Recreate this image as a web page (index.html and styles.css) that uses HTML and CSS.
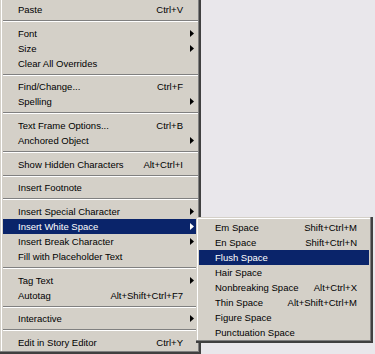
FILE: index.html
```html
<!DOCTYPE html>
<html>
<head>
<meta charset="utf-8">
<link rel="stylesheet" href="styles.css">
</head>
<body>
<div class="stage">
  <div class="menu main">
    <div class="item"><span class="label">Paste</span><span class="key">Ctrl+V</span><span class="arr"></span></div>
    <div class="sep s9"></div>
    <div class="item"><span class="label">Font</span><span class="arr"><svg width="4" height="7" viewBox="0 0 4 7"><polygon points="0,0 4,3.5 0,7"/></svg></span></div>
    <div class="item"><span class="label">Size</span><span class="arr"><svg width="4" height="7" viewBox="0 0 4 7"><polygon points="0,0 4,3.5 0,7"/></svg></span></div>
    <div class="item"><span class="label">Clear All Overrides</span><span class="arr"></span></div>
    <div class="sep s8"></div>
    <div class="item"><span class="label">Find/Change...</span><span class="key">Ctrl+F</span><span class="arr"></span></div>
    <div class="item"><span class="label">Spelling</span><span class="arr"><svg width="4" height="7" viewBox="0 0 4 7"><polygon points="0,0 4,3.5 0,7"/></svg></span></div>
    <div class="sep s9"></div>
    <div class="item"><span class="label">Text Frame Options...</span><span class="key">Ctrl+B</span><span class="arr"></span></div>
    <div class="item"><span class="label">Anchored Object</span><span class="arr"><svg width="4" height="7" viewBox="0 0 4 7"><polygon points="0,0 4,3.5 0,7"/></svg></span></div>
    <div class="sep s9"></div>
    <div class="item"><span class="label">Show Hidden Characters</span><span class="key">Alt+Ctrl+I</span><span class="arr"></span></div>
    <div class="sep s8"></div>
    <div class="item"><span class="label">Insert Footnote</span><span class="arr"></span></div>
    <div class="sep s9"></div>
    <div class="item"><span class="label">Insert Special Character</span><span class="arr"><svg width="4" height="7" viewBox="0 0 4 7"><polygon points="0,0 4,3.5 0,7"/></svg></span></div>
    <div class="item active"><span class="label">Insert White Space</span><span class="arr"><svg width="4" height="7" viewBox="0 0 4 7"><polygon points="0,0 4,3.5 0,7"/></svg></span></div>
    <div class="item"><span class="label">Insert Break Character</span><span class="arr"><svg width="4" height="7" viewBox="0 0 4 7"><polygon points="0,0 4,3.5 0,7"/></svg></span></div>
    <div class="item"><span class="label">Fill with Placeholder Text</span><span class="arr"></span></div>
    <div class="sep s9"></div>
    <div class="item"><span class="label">Tag Text</span><span class="arr"><svg width="4" height="7" viewBox="0 0 4 7"><polygon points="0,0 4,3.5 0,7"/></svg></span></div>
    <div class="item"><span class="label">Autotag</span><span class="key">Alt+Shift+Ctrl+F7</span><span class="arr"></span></div>
    <div class="sep s8"></div>
    <div class="item"><span class="label">Interactive</span><span class="arr"><svg width="4" height="7" viewBox="0 0 4 7"><polygon points="0,0 4,3.5 0,7"/></svg></span></div>
    <div class="sep s9"></div>
    <div class="item"><span class="label">Edit in Story Editor</span><span class="key">Ctrl+Y</span><span class="arr"></span></div>
  </div>

  <div class="menu sub">
    <div class="item"><span class="label">Em Space</span><span class="key">Shift+Ctrl+M</span></div>
    <div class="item"><span class="label">En Space</span><span class="key">Shift+Ctrl+N</span></div>
    <div class="item active"><span class="label">Flush Space</span></div>
    <div class="item"><span class="label">Hair Space</span></div>
    <div class="item"><span class="label">Nonbreaking Space</span><span class="key">Alt+Ctrl+X</span></div>
    <div class="item"><span class="label">Thin Space</span><span class="key">Alt+Shift+Ctrl+M</span></div>
    <div class="item"><span class="label">Figure Space</span></div>
    <div class="item"><span class="label">Punctuation Space</span></div>
  </div>
</div>
</body>
</html>
```

FILE: styles.css
```css
html, body {
  margin: 0;
  padding: 0;
  background: #e9e7eb;
}

.stage {
  position: relative;
  width: 375px;
  height: 354px;
  overflow: hidden;
  font-family: "Liberation Sans", Arial, sans-serif;
  font-size: 9.5px;
  color: #000;
}

.menu {
  background: #d4d0c8;
  box-sizing: border-box;
  display: flex;
  flex-direction: column;
}

.main {
  width: 201px;
  height: 354px;
  padding: 2px 4px 4px 3px;
  box-shadow:
    inset -2px -2px 0 #404040,
    inset -3px -3px 0 #808080,
    inset 1px 0 0 #d4d0c8,
    inset 2px 0 0 #ffffff;
}

.sub {
  position: absolute;
  left: 196px;
  top: 217px;
  width: 177px;
  height: 126px;
  padding: 3px 4px 3px 3px;
  box-shadow:
    inset -2px -2px 0 #404040,
    inset -3px -3px 0 #808080,
    inset 1px 1px 0 #d4d0c8,
    inset 2px 2px 0 #ffffff;
}

.item {
  height: 15px;
  line-height: 15px;
  display: flex;
  align-items: center;
  white-space: nowrap;
}

.main .item {
  padding-left: 15px;
}

.sub .item {
  padding-left: 16px;
  padding-right: 12px;
}

.label {
  flex: 1;
}

.key {
  text-align: right;
}

.arr {
  width: 14px;
  height: 15px;
  display: flex;
  align-items: center;
  padding-left: 7px;
  box-sizing: border-box;
}

.arr svg {
  display: block;
  fill: #000;
}

.item.active {
  background: #0a246a;
  color: #fff;
}

.item.active .arr svg {
  fill: #fff;
}

.sep {
  box-sizing: border-box;
  padding-top: 3px;
  margin-right: -1px;
}

.sep::before {
  content: "";
  display: block;
  height: 0;
  border-top: 1px solid #808080;
  border-bottom: 1px solid #ffffff;
}

.s9 { height: 9px; }
.s8 { height: 8px; }
```
